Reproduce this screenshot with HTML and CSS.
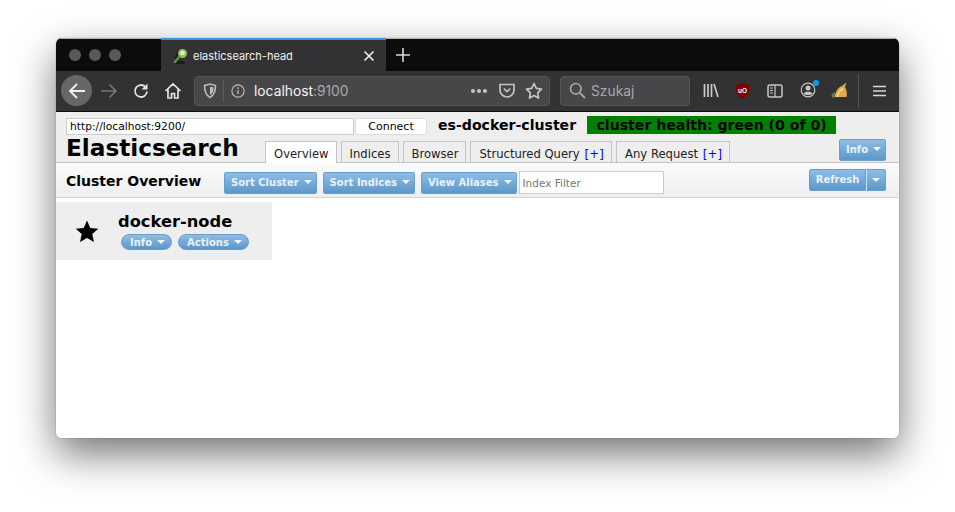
FILE: index.html
```html
<!DOCTYPE html>
<html lang="en">
<head>
<meta charset="utf-8">
<title>elasticsearch-head</title>
<link rel="stylesheet" href="styles.css">
</head>
<body>
<div class="window">
  <div class="titlebar">
    <div class="lights"><i></i><i></i><i></i></div>
    <div class="tab">
      <svg class="favicon" width="18" height="18" viewBox="0 0 18 18"><path d="M3 9 6 3h5l-4 11h5l1 3H2z" fill="#1c1c1c"/><circle cx="10.500" cy="6.500" r="4.500" fill="#8fbf5a"/><circle cx="10.500" cy="6" r="2.400" fill="#d8ecc0"/><path d="M7 10l-4 5" stroke="#5d9a35" stroke-width="2.500" stroke-linecap="round"/></svg>
      <span class="tab-title">elasticsearch-head</span>
      <svg class="tab-close" width="12" height="12" viewBox="0 0 12 12"><path d="M1.500 1.500l9 9m0-9l-9 9" stroke="#f0f0f0" stroke-width="1.600"/></svg>
    </div>
    <svg class="newtab" width="16" height="16" viewBox="0 0 16 16"><path d="M8 1v14M1 8h14" stroke="#d8d8d8" stroke-width="1.600"/></svg>
  </div>
  <div class="navbar">
    <div class="back"><svg width="20" height="20" viewBox="0 0 20 20"><path d="M3 10h15M10 3l-7 7 7 7" fill="none" stroke="#f0f0f0" stroke-width="1.800"/></svg></div>
    <svg class="nav-fwd" width="18" height="18" viewBox="0 0 18 18"><path d="M1 9h15M9.500 2.500 16 9l-6.500 6.500" fill="none" stroke="#77777a" stroke-width="1.600"/></svg>
    <svg class="nav-reload" width="18" height="18" viewBox="0 0 18 18"><path d="M15 9.500A6 6 0 1 1 13 4.500" fill="none" stroke="#e4e4e4" stroke-width="1.800"/><path d="M15.500 1.500v6h-6z" fill="#e4e4e4"/></svg>
    <svg class="nav-home" width="18" height="18" viewBox="0 0 18 18"><path d="M1.500 9 9 2l7.500 7M4 7.500V16h3.500v-4.500h3V16H14V7.500" fill="none" stroke="#e4e4e4" stroke-width="1.700"/></svg>
    <div class="urlbar">
      <svg class="shield" width="14" height="16" viewBox="0 0 14 16"><path d="M1.500 2.500 7 1l5.500 1.500c0 6-1 9.500-5.500 12-4.500-2.500-5.500-6-5.500-12z" fill="none" stroke="#bdbdbd" stroke-width="1.600"/><path d="M7 3.500l3.500 1c0 4-.8 6-3.500 7.500z" fill="#bdbdbd"/></svg>
      <span class="url-sep"></span>
      <svg class="info-i" width="14" height="14" viewBox="0 0 16 16"><circle cx="8" cy="8" r="7" fill="none" stroke="#bdbdbd" stroke-width="1.300"/><path d="M8 7v4.500" stroke="#bdbdbd" stroke-width="1.600"/><circle cx="8" cy="4.700" r="1" fill="#bdbdbd"/></svg>
      <span class="url-text"><b>localhost</b>:9100</span>
      <span class="url-dots"><i></i><i></i><i></i></span>
      <svg class="pocket" width="16" height="15" viewBox="0 0 16 15"><path d="M1 1.500h14v5.500a7 7 0 0 1-14 0z" fill="none" stroke="#c4c4c4" stroke-width="1.700"/><path d="M4.800 5.500 8 8.500l3.200-3" fill="none" stroke="#c4c4c4" stroke-width="1.700"/></svg>
      <svg class="star-o" width="18" height="17" viewBox="0 0 18 17"><path d="M9 1.500l2.300 4.900 5.200.7-3.800 3.700.9 5.300L9 13.500l-4.600 2.600.9-5.300-3.800-3.700 5.200-.7z" fill="none" stroke="#c4c4c4" stroke-width="1.700" stroke-linejoin="round"/></svg>
    </div>
    <div class="searchbar">
      <svg width="17" height="17" viewBox="0 0 17 17"><circle cx="6.800" cy="6.800" r="5.300" fill="none" stroke="#a8a8a8" stroke-width="1.600"/><path d="M10.800 10.800 16 16" stroke="#a8a8a8" stroke-width="1.800"/></svg>
      <span class="search-text">Szukaj</span>
    </div>
    <div class="nav-tools">
      <svg width="16" height="15" viewBox="0 0 16 15"><path d="M1.500 1v13M5 1v13M8.500 1v13M11 1l4 13" stroke="#c8c8c8" stroke-width="1.700"/></svg>
      <svg width="15" height="16" viewBox="0 0 15 16"><path d="M.5 2 7.500 0l7 2c0 7-1.500 11-7 14C2 13 .5 9 .5 2z" fill="#800000"/><text x="7.500" y="10" class="ublock">uO</text></svg>
      <svg class="sidebar" width="16" height="14" viewBox="0 0 16 14"><rect x="1" y="1" width="14" height="12" rx="2" fill="none" stroke="#c8c8c8" stroke-width="1.500"/><path d="M8 1v12M3 4h3M3 6.500h3M3 9h3" stroke="#c8c8c8" stroke-width="1.200"/></svg>
      <svg class="account" width="21" height="20" viewBox="0 0 21 20"><circle cx="8" cy="11" r="6.800" fill="none" stroke="#c8c8c8" stroke-width="1.200"/><circle cx="8" cy="9" r="2.500" fill="#c8c8c8"/><path d="M3.500 14.500c1-2.500 8-2.500 9 0-1.500 2-7.500 2-9 0z" fill="#c8c8c8"/><circle cx="16" cy="4" r="3" fill="#0a9fe8"/></svg>
      <svg width="17" height="17" viewBox="0 0 17 17"><path d="M15.500 .5 11 4C7 5 4.500 10 3.500 15h12c1-4 0-7-1.500-10z" fill="#e0a94a"/><path d="M6 15c1-4 3-7 6-8" fill="none" stroke="#f7dc8a" stroke-width="1.500"/><path d="M.5 12.500 4 9.500l-.5 6H1z" fill="#6d7a58"/></svg>
    </div>
    <span class="nav-sep"></span>
    <svg class="menu" width="13" height="12" viewBox="0 0 13 12"><path d="M0 1.500h13M0 6h13M0 10.500h13" stroke="#d8d8d8" stroke-width="1.600"/></svg>
  </div>

  <div class="page">
    <div class="head">
      <div class="head-top">
        <input class="base-uri" type="text" value="http://localhost:9200/">
        <button class="connect" type="button">Connect</button>
        <span class="cluster-name">es-docker-cluster</span>
        <span class="health">cluster health: green (0 of 0)</span>
      </div>
      <div class="head-main">
        <h1>Elasticsearch</h1>
        <div class="tabs">
          <span class="tabb active">Overview</span>
          <span class="tabb">Indices</span>
          <span class="tabb">Browser</span>
          <span class="tabb">Structured Query <em>[+]</em></span>
          <span class="tabb">Any Request <em>[+]</em></span>
        </div>
        <span class="btn info-btn">Info<i class="caret"></i></span>
      </div>
    </div>
    <div class="toolbar">
      <h2>Cluster Overview</h2>
      <span class="btn">Sort Cluster<i class="caret"></i></span>
      <span class="btn">Sort Indices<i class="caret"></i></span>
      <span class="btn">View Aliases<i class="caret"></i></span>
      <input class="filter" type="text" placeholder="Index Filter">
      <div class="refresh">
        <span class="btn refresh-main">Refresh</span>
        <span class="btn refresh-drop"><i class="caret"></i></span>
      </div>
    </div>
    <div class="node">
      <svg class="node-star" width="24" height="23" viewBox="0 0 24 23"><path d="M12 .5l3.300 7.400 8 .8-6 5.400 1.700 7.900-7-4.100-7 4.100 1.700-7.900-6-5.400 8-.8z" fill="#000"/></svg>
      <div class="node-body">
        <div class="node-name">docker-node</div>
        <div class="node-actions">
          <span class="btn pill">Info<i class="caret"></i></span>
          <span class="btn pill">Actions<i class="caret"></i></span>
        </div>
      </div>
    </div>
  </div>
</div>
</body>
</html>
```
FILE: styles.css
```css
* { box-sizing: border-box; }
html, body { height: 100%; }
body {
  margin: 0;
  padding: 38px 56px 0;
  background: #fff;
  overflow: hidden;
  font-family: "DejaVu Sans", sans-serif;
}
.window {
  width: 843px;
  height: 400px;
  border-radius: 6px;
  background: #fff;
  overflow: hidden;
  box-shadow: 0 0 0 1px rgba(0,0,0,.06), 0 16px 40px rgba(0,0,0,.55);
}

/* browser chrome */
.titlebar {
  height: 33px;
  background: #0c0c0d;
  border-top: 1px solid #b4b4b4;
  display: flex;
  align-items: stretch;
}
.lights {
  width: 105px;
  display: flex;
  align-items: center;
  gap: 8px;
  padding-left: 13px;
}
.lights i {
  width: 12px;
  height: 12px;
  border-radius: 50%;
  background: #59595b;
}
.tab {
  width: 225px;
  margin-top: -1px;
  background: #323234;
  border-top: 2px solid #3d8fdc;
  display: flex;
  align-items: center;
  padding: 0 11px;
  color: #f0f0f0;
  font: 11px "Inter", "Liberation Sans", sans-serif;
}
.favicon { margin-right: 3px; }
.tab-title { flex: 1; }
.newtab { align-self: center; margin-left: 9px; }
.navbar {
  height: 41px;
  background: #323234;
  border-bottom: 1px solid #0c0c0d;
  display: flex;
  align-items: center;
  padding: 0 0 1px 5px;
}
.navbar > * { flex: none; }
.back {
  width: 31px;
  height: 31px;
  border-radius: 50%;
  background: #67676a;
  display: flex;
  align-items: center;
  justify-content: center;
}
.nav-fwd { margin-left: 8px; }
.nav-reload { margin-left: 14px; }
.nav-home { margin-left: 14px; }
.urlbar {
  margin-left: 12px;
  width: 356px;
  height: 30px;
  background: #474749;
  border: 1px solid #545456;
  border-radius: 4px;
  display: flex;
  align-items: center;
  color: #a8a8a8;
  font: 13.800px "Inter", "Liberation Sans", sans-serif;
}
.shield { margin-left: 8px; }
.url-sep {
  width: 1px;
  height: 22px;
  background: #5e5e60;
  margin: 0 7px 0 6px;
}
.url-text { margin: 1px 0 0 9px; flex: 1; }
.url-text b { font-weight: 400; color: #f4f4f4; }
.url-dots { display: flex; gap: 2px; margin-right: 12px; }
.url-dots i {
  width: 4px;
  height: 4px;
  border-radius: 50%;
  background: #c4c4c4;
}
.pocket { margin-right: 10px; }
.star-o { margin-right: 6px; }
.searchbar {
  margin-left: 10px;
  width: 130px;
  height: 30px;
  background: #474749;
  border: 1px solid #545456;
  border-radius: 4px;
  display: flex;
  align-items: center;
  gap: 5px;
  padding-left: 8px;
  color: #a8a8a8;
  font: 13.800px "Inter", "Liberation Sans", sans-serif;
}
.search-text { margin-top: 1px; }
.nav-tools {
  margin-left: 13px;
  display: flex;
  align-items: center;
  gap: 16px;
}
.ublock {
  font: bold 6.500px "Liberation Sans", sans-serif;
  fill: #fff;
  text-anchor: middle;
}
.sidebar { margin-left: 1px; }
.account { margin: -4px -6px 0 1px; }
.nav-sep {
  width: 1px;
  height: 34px;
  background: #555557;
  margin: 0 14px 0 10px;
}

/* page head */
.page { height: 326px; background: #fff; }
.head {
  height: 51px;
  background: #eee;
  border-bottom: 1px solid #c4c4c4;
  padding: 3px 13px 0 10px;
}
.head-top {
  height: 19px;
  display: flex;
  align-items: center;
}
.base-uri {
  width: 288px;
  height: 17px;
  margin: 3px 1px 0 0;
  padding: 0 3px;
  border: 1px solid #ccc;
  background: #fff;
  color: #000;
  font: 10.700px "DejaVu Sans", sans-serif;
  outline: none;
}
.connect {
  width: 72px;
  height: 17px;
  margin-top: 3px;
  padding: 0;
  border: 1px solid #dcdcdc;
  border-radius: 3px;
  background: #fff;
  color: #000;
  font: 11px "DejaVu Sans", sans-serif;
}
.cluster-name {
  margin-left: 11px;
  font: bold 14.100px "DejaVu Sans", sans-serif;
  color: #000;
}
.health {
  margin-left: 11px;
  width: 249px;
  height: 18px;
  background: #008000;
  color: #000;
  text-align: center;
  font: bold 14.100px/18px "DejaVu Sans", sans-serif;
  white-space: nowrap;
}
.head-main {
  display: flex;
  align-items: flex-end;
  height: 28px;
}
h1 {
  margin: 0;
  width: 199px;
  font: bold 23.200px/28px "DejaVu Sans", sans-serif;
  color: #000;
  white-space: nowrap;
}
.tabs { display: flex; gap: 4px; flex: 1; }
.tabb {
  height: 21px;
  padding: 4px 7px 0 8px;
  border: 1px solid #c4c4c4;
  border-bottom: 0;
  background: #eee;
  color: #222;
  font: 11.600px/16px "DejaVu Sans", sans-serif;
  white-space: nowrap;
}
.tabb.active { background: #fff; height: 22px; margin-bottom: -1px; }
.tabb em { font-style: normal; color: #00f; margin-left: 1px; letter-spacing: .3px; }

/* buttons */
.btn {
  display: inline-flex;
  align-items: center;
  justify-content: center;
  height: 22px;
  padding: 0 4px 2px 6px;
  border: 1px solid #6a9fcc;
  border-radius: 2px;
  background: linear-gradient(#8dbde6, #5c97ca);
  color: #e9f3fb;
  font: bold 10px "DejaVu Sans", sans-serif;
  white-space: nowrap;
}
.caret {
  width: 0;
  height: 0;
  margin-left: 5px;
  border-left: 4px solid transparent;
  border-right: 4px solid transparent;
  border-top: 4px solid #f0f6fb;
}
.info-btn { width: 47px; margin-bottom: 1px; }

/* toolbar */
.toolbar {
  height: 35px;
  background: linear-gradient(#fbfbfb, #eceef0);
  border-bottom: 1px solid #d4d4d4;
  display: flex;
  align-items: center;
  padding: 0 13px 0 10px;
}
h2 {
  margin: 2px 0 0;
  width: 158px;
  font: bold 14px "DejaVu Sans", sans-serif;
  color: #000;
  white-space: nowrap;
}
.toolbar .btn { margin: 6px 6px 0 0; }
.filter {
  width: 145px;
  height: 23px;
  margin: 5px 0 0 -4px;
  padding: 0 3px;
  border: 1px solid #ccc;
  background: #fff;
  font: 10.500px "DejaVu Sans", sans-serif;
  outline: none;
}
.filter::placeholder { color: #777; opacity: 1; }
.refresh { margin-left: auto; display: flex; align-self: flex-start; margin-top: 6px; }
.toolbar .refresh-main { margin: 0; width: 57px; padding: 0 0 2px; border-radius: 2px 0 0 2px; }
.toolbar .refresh-drop { margin: 0; width: 20px; padding: 0; border-left-color: #cfe2f2; border-radius: 0 2px 2px 0; }
.refresh-drop .caret { margin: 0; }

/* node */
.node {
  width: 216px;
  height: 58px;
  margin-top: 4px;
  background: #eee;
  display: flex;
  align-items: center;
  padding-left: 19px;
}
.node-star { flex: none; }
.node-body { margin-left: 19px; }
.node-name {
  font: bold 16.300px/19px "DejaVu Sans", sans-serif;
  color: #000;
}
.node-actions { display: flex; gap: 6px; margin: 3px 0 0 3px; }
.pill {
  height: 16px;
  padding: 0 6px 0 8px;
  border-radius: 9px;
}
.pill .caret { margin-left: 5px; }
```
